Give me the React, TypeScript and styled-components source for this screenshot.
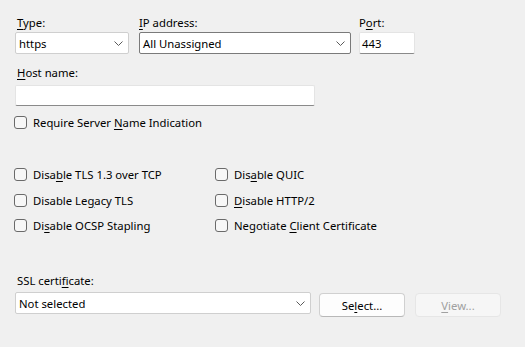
import React from "react";
import styled, { createGlobalStyle } from "styled-components";

const Global = createGlobalStyle`
  html, body { margin: 0; padding: 0; background: #f0f0f0; }
  body {
    font-family: "Noto Sans", "Open Sans", sans-serif;
    font-size: 11.3px;
    color: #000;
  }
`;

const Page = styled.div`
  width: 525px;
  height: 347px;
  box-sizing: border-box;
  padding: 15px 0 0 15px;
  display: flex;
  flex-direction: column;
  background: #f0f0f0;
`;

const TopRow = styled.div`
  display: flex;
`;

const Field = styled.div<{ $w: number; $mr?: number; $mt?: number }>`
  display: flex;
  flex-direction: column;
  width: ${(p) => p.$w}px;
  margin-right: ${(p) => p.$mr ?? 0}px;
  margin-top: ${(p) => p.$mt ?? 0}px;
`;

const Label = styled.div<{ $indent?: number; $mb?: number }>`
  height: 16px;
  line-height: 16px;
  padding-left: ${(p) => p.$indent ?? 2}px;
  margin-bottom: ${(p) => p.$mb ?? 1}px;
  white-space: nowrap;
`;

const Key = styled.span`
  text-decoration: underline;
  text-underline-offset: 2px;
  text-decoration-thickness: 1px;
`;

const Combo = styled.div<{ $dark?: boolean }>`
  box-sizing: border-box;
  height: 22px;
  width: 100%;
  background: #fff;
  border: 1px solid ${(p) => (p.$dark ? "#7a7a7a" : "#cfcfcf")};
  border-radius: 2px;
  display: flex;
  align-items: center;
  justify-content: space-between;
  padding: 0 5px 0 3px;
  white-space: nowrap;
`;

const TextBox = styled.div<{ $h?: number }>`
  box-sizing: border-box;
  height: ${(p) => p.$h ?? 22}px;
  width: 100%;
  background: #fff;
  border: 1px solid #e4e4e4;
  border-bottom-color: #8a8a8a;
  border-radius: 2px;
  display: flex;
  align-items: center;
  padding: 0 2px;
`;

const CheckRow = styled.label<{ $mt?: number }>`
  display: flex;
  align-items: center;
  height: 17px;
  margin-top: ${(p) => p.$mt ?? 0}px;
  margin-left: -1px;
  white-space: nowrap;
`;

const Box = styled.span`
  box-sizing: border-box;
  width: 13px;
  height: 13px;
  border: 1px solid #6a6a6a;
  border-radius: 3px;
  background: #f7f7f7;
  margin-right: 6px;
  flex: none;
`;

const OptionGrid = styled.div`
  display: grid;
  grid-template-columns: 201px auto;
  row-gap: 8.5px;
  margin-top: 35px;
`;

const BottomRow = styled.div`
  display: flex;
  align-items: flex-start;
`;

const Button = styled.div<{ $disabled?: boolean }>`
  box-sizing: border-box;
  width: 86px;
  height: 24px;
  margin-top: 1px;
  margin-left: ${(p) => (p.$disabled ? 10 : 8)}px;
  border-radius: 4px;
  border: 1px solid ${(p) => (p.$disabled ? "#e6e6e6" : "#d0d0d0")};
  border-bottom-color: ${(p) => (p.$disabled ? "#e6e6e6" : "#b8b8b8")};
  background: ${(p) => (p.$disabled ? "#f6f6f6" : "#fdfdfd")};
  color: ${(p) => (p.$disabled ? "#a0a0a0" : "#000")};
  display: flex;
  align-items: center;
  justify-content: center;
`;

const Chevron = () => (
  <svg width="9" height="5" viewBox="0 0 9 5" style={{ flex: "none" }}>
    <path d="M0.5 0.5 L4.5 4.5 L8.5 0.5" fill="none" stroke="#5a5a5a" strokeWidth="1" />
  </svg>
);

const Check = ({ children, mt }: { children: React.ReactNode; mt?: number }) => (
  <CheckRow $mt={mt}>
    <Box />
    <span>{children}</span>
  </CheckRow>
);

export default function App() {
  return (
    <>
      <Global />
      <Page>
        <TopRow>
          <Field $w={114} $mr={10}>
            <Label>
              <Key>T</Key>ype:
            </Label>
            <Combo>
              <span>https</span>
              <Chevron />
            </Combo>
          </Field>
          <Field $w={212} $mr={8}>
            <Label $indent={0}>
              <Key>I</Key>P address:
            </Label>
            <Combo $dark>
              <span>All Unassigned</span>
              <Chevron />
            </Combo>
          </Field>
          <Field $w={56}>
            <Label $indent={0}>
              P<Key>o</Key>rt:
            </Label>
            <TextBox>443</TextBox>
          </Field>
        </TopRow>

        <Field $w={300} $mt={11}>
          <Label $mb={4}>
            <Key>H</Key>ost name:
          </Label>
          <TextBox $h={21} />
        </Field>

        <Check mt={8}>
          Require Server <Key>N</Key>ame Indication
        </Check>

        <OptionGrid>
          <Check>
            Disa<Key>b</Key>le TLS 1.3 over TCP
          </Check>
          <Check>
            Dis<Key>a</Key>ble QUIC
          </Check>
          <Check>
            Disable Le<Key>g</Key>acy TLS
          </Check>
          <Check>
            <Key>D</Key>isable HTTP/2
          </Check>
          <Check>
            Di<Key>s</Key>able OCSP Stapling
          </Check>
          <Check>
            Negotiate <Key>C</Key>lient Certificate
          </Check>
        </OptionGrid>

        <Field $w={296} $mt={39}>
          <Label $mb={3}>
            SSL certi<Key>f</Key>icate:
          </Label>
        </Field>
        <BottomRow>
          <Field $w={296}>
            <Combo>
              <span>Not selected</span>
              <Chevron />
            </Combo>
          </Field>
          <Button>
            Se<Key>l</Key>ect...
          </Button>
          <Button $disabled>
            <Key>V</Key>iew...
          </Button>
        </BottomRow>
      </Page>
    </>
  );
}
